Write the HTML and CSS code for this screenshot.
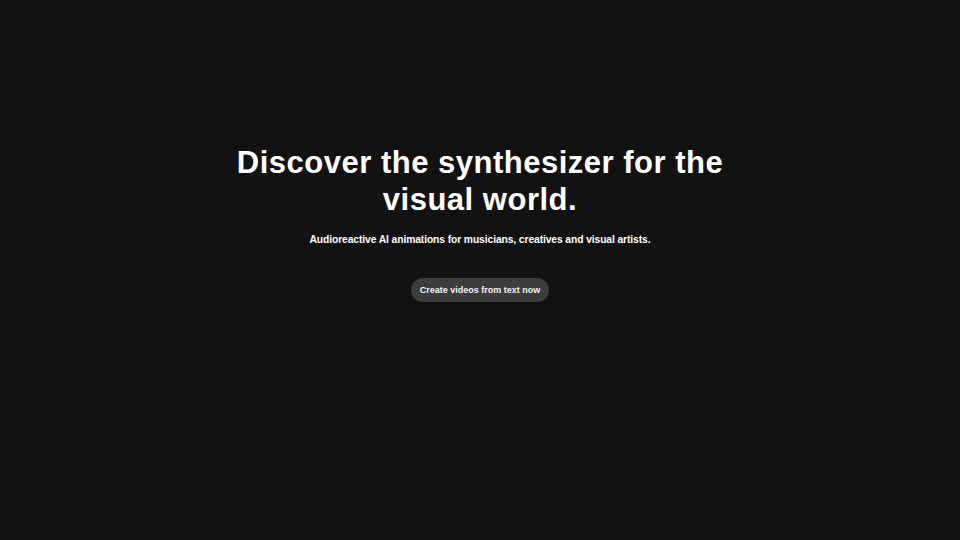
FILE: index.html
```html
<!DOCTYPE html>
<html>
<head>
<meta charset="utf-8">
<link rel="stylesheet" href="styles.css">
</head>
<body>
<main class="hero">
  <h1 class="title">Discover the synthesizer for the<br>visual world.</h1>
  <p class="subtitle">Audioreactive AI animations for musicians, creatives and visual artists.</p>
  <a class="cta" href="#">Create videos from text now</a>
</main>
</body>
</html>
```

FILE: styles.css
```css
html, body {
  margin: 0;
  padding: 0;
  background: #121212;
  height: 100%;
}
body {
  font-family: "Liberation Sans", Arial, sans-serif;
  color: #ffffff;
}
.hero {
  display: flex;
  flex-direction: column;
  align-items: center;
  text-align: center;
  padding-top: 144px;
}
.title {
  margin: 0;
  font-size: 31px;
  line-height: 37px;
  letter-spacing: 0.5px;
  font-weight: 700;
}
.subtitle {
  margin: 15px 0 0;
  font-size: 10.3px;
  line-height: 14px;
  letter-spacing: -0.1px;
  font-weight: 700;
}
.cta {
  margin-top: 31px;
  display: inline-flex;
  align-items: center;
  justify-content: center;
  width: 138px;
  height: 24px;
  border-radius: 12px;
  background: #3d3d3d;
  color: #f2f2f2;
  font-size: 9px;
  font-weight: 700;
  text-decoration: none;
}
```
